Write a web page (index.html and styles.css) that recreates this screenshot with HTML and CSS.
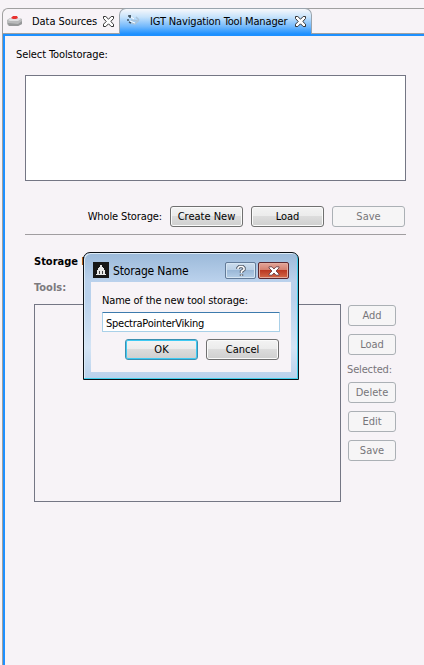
FILE: index.html
```html
<!DOCTYPE html>
<html lang="en">
<head>
<meta charset="utf-8">
<title>IGT Navigation Tool Manager</title>
<link rel="stylesheet" href="styles.css">
</head>
<body>
<div class="app">
  <nav class="tabs">
    <div class="tab">
      <svg class="tab-icon" width="16" height="14" viewBox="0 0 16 14"><path d="M0 7l3-2h10l2 1v5l-4 2H2l-2-2z" fill="#b9babb"/><path d="M1 7l3-2h9l1 1-3 2H3z" fill="#dedfe0"/><path d="M1 10l10 1 4-3v3l-4 2H2l-1-2z" fill="#969899"/><path d="M4 5l2-2h4l1 2-2 1H6z" fill="#e83230"/></svg>
      <span class="tab-name t-data">Data Sources</span>
      <svg class="tab-close" width="11" height="11" viewBox="0 0 11 11"><path d="M.5.5h2.3l2.7 2.7L8.200.5h2.300v2L7.800 5.500l2.700 2.700v2.300H8.200L5.500 7.800l-2.700 2.700H.5V8.200l2.700-2.700L.5 2.500z" fill="#fff" stroke="#333"/></svg>
    </div>
    <div class="tab active">
      <svg class="tab-icon tools" width="16" height="14" viewBox="0 0 16 14"><path d="M2 2h3M4 1v3M1 6h2M3 8l2 1" stroke="#425463" stroke-width="1.500" fill="none"/><path d="M5 6l7 1-3 3-4-1M10 3l3 3" stroke="#a9c3d9" stroke-width="1.500" fill="none"/><path d="M5 3l3 2M4 7l5 2" stroke="#fff" fill="none"/></svg>
      <span class="tab-name t-igt">IGT Navigation Tool Manager</span>
      <svg class="tab-close" width="11" height="11" viewBox="0 0 11 11"><path d="M.5.5h2.3l2.7 2.7L8.200.5h2.300v2L7.800 5.500l2.700 2.700v2.300H8.200L5.500 7.800l-2.700 2.700H.5V8.200l2.700-2.700L.5 2.500z" fill="#fff" stroke="#333"/></svg>
    </div>
  </nav>
  <main class="view">
    <div class="label"><span class="t-select">Select Toolstorage:</span></div>
    <div class="storage-list"></div>
    <div class="whole">
      <span class="t-whole">Whole Storage:</span>
      <button class="btn"><span class="t-create">Create New</span></button>
      <button class="btn"><span class="t-load">Load</span></button>
      <button class="btn" disabled><span class="t-save">Save</span></button>
    </div>
    <div class="heading"><span class="t-storage">Storage Name:</span></div>
    <div class="tools-label"><span class="t-tools">Tools:</span></div>
    <div class="tools-area">
      <div class="tool-list"></div>
      <div class="side">
        <button class="btn" disabled><span class="t-add">Add</span></button>
        <button class="btn" disabled><span class="t-load">Load</span></button>
        <div class="selected"><span class="t-selected">Selected:</span></div>
        <button class="btn" disabled><span class="t-delete">Delete</span></button>
        <button class="btn" disabled><span class="t-edit">Edit</span></button>
        <button class="btn" disabled><span class="t-save">Save</span></button>
      </div>
    </div>
  </main>
</div>
<section class="dialog">
  <header class="titlebar">
    <svg class="logo" width="16" height="16" viewBox="0 0 16 16"><path d="M0 0h16v16H0z" fill="#171717"/><path d="M7 3h2v2h1v1h1v2h1v4h1v1H3v-1h1V8h1V6h1V5h1z" fill="#e8e8e8"/><path d="M6.500 9v3M9.500 9v3" stroke="#444"/></svg>
    <span class="title"><span class="t-title">Storage Name</span></span>
    <span class="win help"><svg width="10" height="12" viewBox="0 0 10 12"><path d="M2 4V3l1.500-1.500h3L8 3v1.500L5.500 6.500V8M5.500 9.300v1.700" fill="none" stroke="#505866" stroke-width="3.400"/><path d="M2 4V3l1.500-1.500h3L8 3v1.500L5.500 6.500V8M5.500 9.500v1.200" fill="none" stroke="#fff" stroke-width="1.600"/></svg></span>
    <span class="win close"><svg width="12" height="10" viewBox="0 0 12 10"><path d="M1 .8h3L6 3 8 .8h3V2L8 5l3 3v1.200H8L6 7 4 9.200H1V8l3-3-3-3z" fill="#fff" stroke="#6b3e46" stroke-width=".9"/></svg></span>
  </header>
  <div class="dialog-body">
    <div class="prompt"><span class="t-prompt">Name of the new tool storage:</span></div>
    <div class="field"><span class="t-value">SpectraPointerViking</span></div>
    <div class="actions">
      <button class="btn default"><span class="t-ok">OK</span></button>
      <button class="btn"><span class="t-cancel">Cancel</span></button>
    </div>
  </div>
</section>
</body>
</html>
```
FILE: styles.css
```css
* { box-sizing: border-box; }
body {
  margin: 0;
  width: 424px;
  height: 665px;
  overflow: hidden;
  background: #f7f3f7;
  color: #000;
  font: 11px/14px "DejaVu Sans Condensed", "DejaVu Sans", sans-serif;
  font-stretch: condensed;
}
span { white-space: nowrap; }
.app { height: 665px; padding: 8px 0 0 2px; }
.tabs {
  display: flex;
  height: 26px;
  border-top: 1px solid #a0a0a0;
  border-left: 1px solid #a0a0a0;
  border-bottom: 1px solid #a0a0a0;
  border-top-left-radius: 6px;
}
.tab { display: flex; align-items: center; width: 116px; height: 24px; padding-left: 4px; }
.tab-icon { width: 16px; margin-top: -2px; flex: none; }
.tab-name { width: 70px; margin: 1px 0 0 9px; flex: none; }
.tab-close { margin-left: 1px; flex: none; margin-top: 1px; }
.tab.active {
  width: 193px;
  height: 26px;
  margin-top: -1px;
  padding-left: 6px;
  border: 1px solid #9aa4ad;
  border-bottom: 0;
  border-radius: 7px 7px 0 0;
  background: linear-gradient(#f7f8fb 0%, #c7e3fb 32%, #73b9fc 70%, #1e90ff 100%);
}
.active .tab-name { width: 142px; margin-left: 8px; }
.active .tab-close { margin: -1px 0 0 3px; }
.t-data { letter-spacing: -.06px; }
.t-igt { letter-spacing: -.15px; }
.t-select { margin-left: 1px; letter-spacing: -.1px; }
.t-whole { letter-spacing: -.13px; }
.t-selected { letter-spacing: -.15px; }
.t-title { letter-spacing: -.17px; }
.t-prompt { letter-spacing: -.17px; }
.t-value { letter-spacing: -.25px; }
.view {
  height: 631px;
  border-left: 1px solid #a0a0a0;
  box-shadow: inset 2px 2px #1e90ff;
  padding: 14px 0 0 12px;
}
.label { height: 27px; }
.storage-list { width: 381px; height: 106px; margin-left: 10px; border: 1px solid #747684; background: #fff; }
.whole {
  display: flex;
  gap: 8px;
  align-items: center;
  justify-content: flex-end;
  width: 381px;
  height: 54px;
  margin-left: 10px;
  padding: 17px 1px 0 0;
  border-bottom: 1px solid #a09da0;
}
.t-whole { padding-top: 2px; }
.btn {
  display: flex;
  align-items: center;
  justify-content: center;
  width: 73px;
  height: 21px;
  padding: 1px 0 0;
  border: 1px solid #707070;
  border-radius: 3px;
  background: linear-gradient(#f3f3f3 0%, #ebebeb 49%, #dcdcdc 50%, #cfcfcf 100%);
  box-shadow: inset 0 0 0 1px #fafafa;
  color: #000;
  font: inherit;
}
.btn:disabled { border-color: #abb0b5; background: #f6f5f6; box-shadow: none; color: #77757a; }
.heading { height: 26px; padding: 20px 0 0 19px; font-weight: bold; }
.tools-label { padding: 20px 0 0 19px; font-weight: bold; color: #7c7a7e; }
.tools-area { display: flex; gap: 7px; margin: 9px 0 0 19px; }
.tool-list { width: 307px; height: 198px; border: 1px solid #747684; }
.side { display: flex; flex-direction: column; gap: 8px; padding-top: 1px; color: #77757a; }
.side .btn { width: 48px; }
.selected { height: 11px; margin-left: -1px; line-height: 14px; }
.dialog {
  position: absolute;
  left: 83px;
  top: 252px;
  width: 216px;
  height: 128px;
  padding: 0 7px 7px;
  border: 1px solid #0b1016;
  border-radius: 7px 7px 0 0;
  background: linear-gradient(#9bb9d9 0%, #bad1ec 22%, #b9d1ec 36%, #d4e4f5 75%, #b9d1ec 100%);
  box-shadow: inset -1px -1px #41cfec, inset 1px 1px #dceaf6;
}
.titlebar { display: flex; height: 29px; padding: 9px 2px 0 2px; font-size: 12px; }
.logo { flex: none; }
.title { flex: 1; margin-left: 4px; line-height: 19px; }
.win {
  display: flex;
  align-items: center;
  justify-content: center;
  width: 31px;
  height: 17px;
  margin-left: 2px;
  border: 1px solid #637b98;
  border-radius: 2px;
  background: linear-gradient(#cbdced 0%, #b9cfe6 49%, #9bb8d7 50%, #b5cee7 100%);
  box-shadow: inset 0 0 0 1px #d6e5f3;
}
.win.close { border-color: #5b2831; background: linear-gradient(#e3a59a 0%, #d47e6d 48%, #bb3923 50%, #d36949 100%); box-shadow: inset 0 0 0 1px #e3ab9e; }
.dialog-body { width: 200px; height: 90px; padding: 12px 11px 0; background: #f7f3f7; }
.prompt { height: 18px; }
.field { width: 178px; height: 20px; padding: 3px 0 0 3px; border: 1px solid #a9d0e8; border-top-color: #3d7bad; border-radius: 1px; background: #fff; line-height: 15px; }
.actions { display: flex; gap: 8px; padding: 7px 0 0 23px; }
.btn.default { border-color: #3c8fb0; box-shadow: inset 0 0 0 1px #3ecaf3; }
```
